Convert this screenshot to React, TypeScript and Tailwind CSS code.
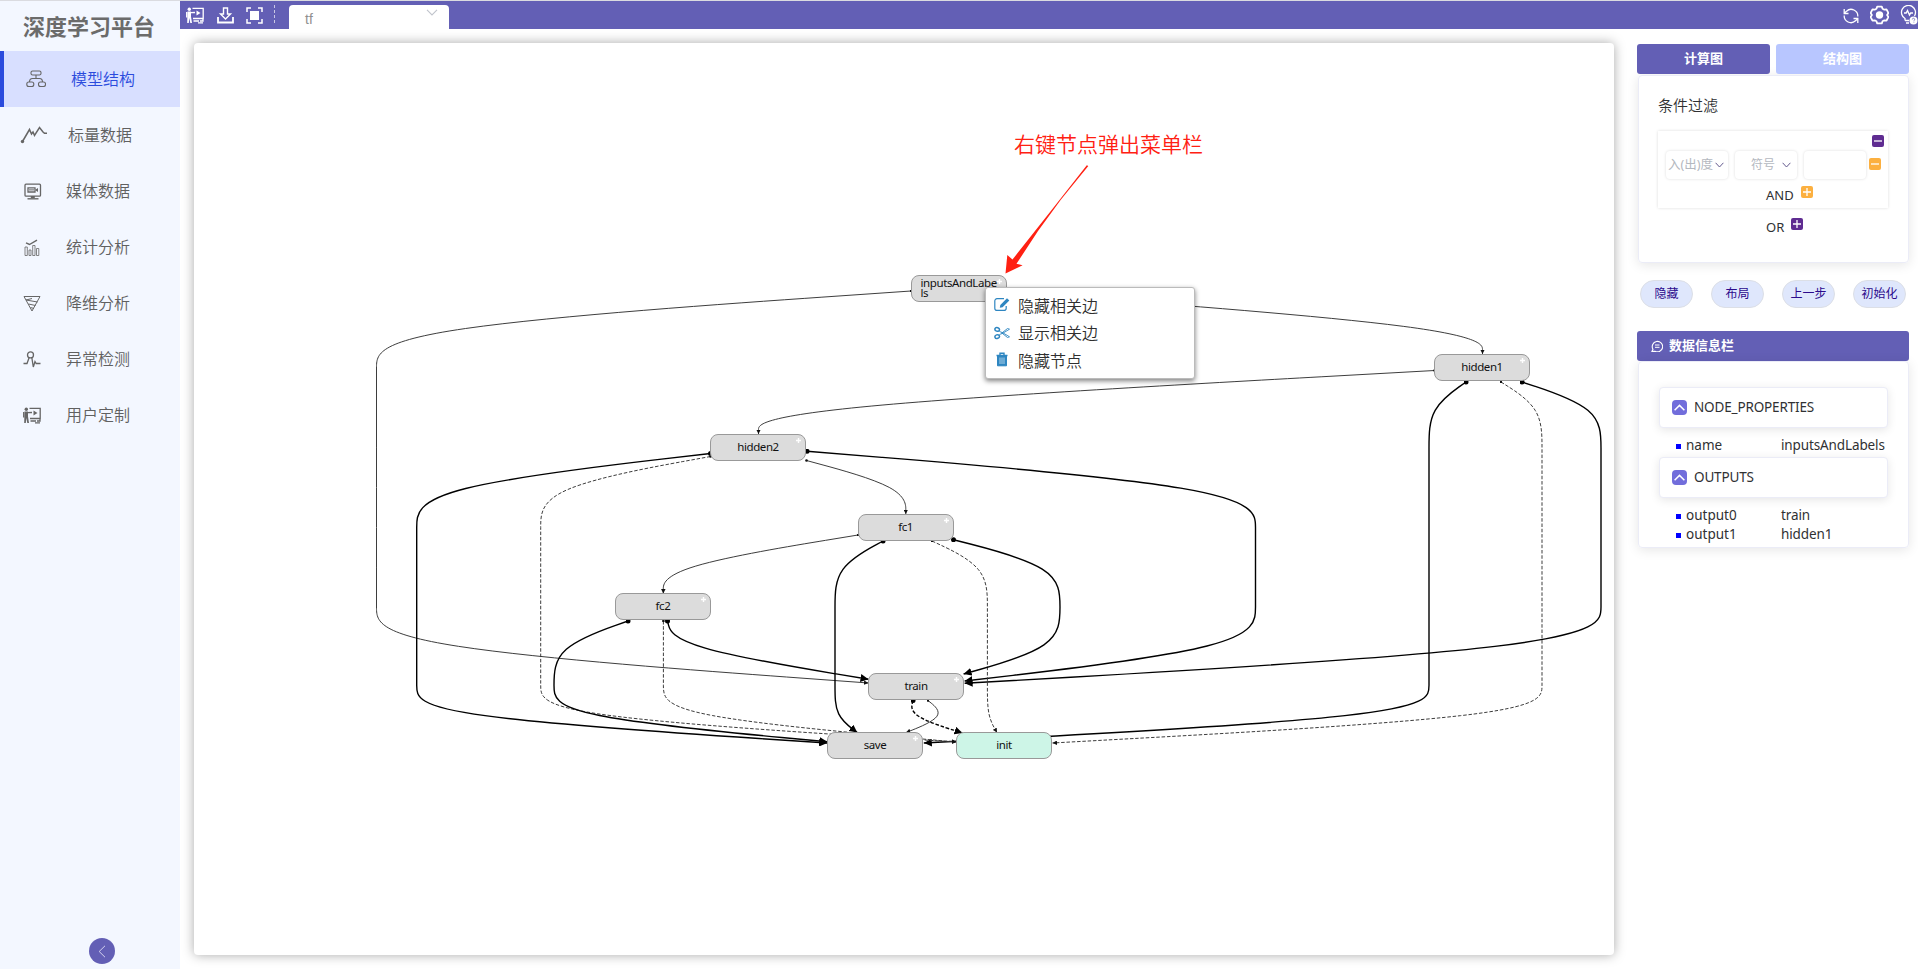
import type { ReactNode } from "react";

type Point = [number, number];

interface GraphNode {
  id: string;
  x: number;
  y: number;
  expandable?: boolean;
}

interface GraphEdge {
  points: Point[];
  bold?: boolean;
  dashed?: boolean;
}

// Graph space starts at the top left corner of the canvas panel.
const ORIGIN_X = 194;
const ORIGIN_Y = 43;
const NODE_WIDTH = 96;
const NODE_HEIGHT = 27;

const nodes: GraphNode[] = [
  { id: "inputsAndLabels", x: 959, y: 288.5, expandable: true },
  { id: "hidden1", x: 1482, y: 367.5, expandable: true },
  { id: "hidden2", x: 758, y: 447.5, expandable: true },
  { id: "fc1", x: 905.6, y: 527.5, expandable: true },
  { id: "fc2", x: 663, y: 606.5, expandable: true },
  { id: "train", x: 916, y: 686.5, expandable: true },
  { id: "save", x: 875, y: 745.5, expandable: true },
  { id: "init", x: 1004, y: 745.5 },
];

const rows = [328, 368, 408, 448, 487.5, 527.5, 567, 607, 647, 687, 716];

function lane(x: number, from: number, to: number): Point[] {
  return rows.filter((y) => y >= from && y <= to).map((y): Point => [x, y]);
}

const edges: GraphEdge[] = [
  { points: [[911, 291], ...lane(376.5, 328, 647), [868.5, 683]] },
  { points: [[1007, 292], [1482.5, 328], [1482.5, 354]] },
  { points: [[1434.5, 370.5], [758.5, 408], [758.5, 434]] },
  { points: [[1466, 382], ...lane(1429, 408, 716), [923.8, 743]], bold: true },
  { points: [[1501, 382], ...lane(1542, 408, 716), [1052.5, 743]], dashed: true },
  { points: [[1522, 382], ...lane(1601, 408, 647), [964.6, 683.3]], bold: true },
  { points: [[807, 451.3], ...lane(1255.5, 487, 647), [964.6, 681]], bold: true },
  { points: [[806.5, 460.5], [905.8, 487.5], [905.8, 514]] },
  { points: [[710.5, 453.5], ...lane(416.7, 487, 716), [827.3, 743]], bold: true },
  { points: [[710.5, 456.5], ...lane(540.7, 487, 716), [956.3, 742]], dashed: true },
  { points: [[858, 535], [663.3, 567], [663.3, 593.5]] },
  { points: [[883, 541], ...lane(835, 567, 716), [857.3, 732.6]], bold: true },
  { points: [[932, 541], ...lane(987.4, 567, 716), [997, 732.6]], dashed: true },
  { points: [[953.5, 539.7], ...lane(1060, 567, 647), [963.6, 674]], bold: true },
  { points: [[667.5, 621], [674, 647], [868.5, 679.3]], bold: true },
  { points: [[628, 621], ...lane(554, 647, 716), [827.3, 741.8]], bold: true },
  { points: [[663.4, 621], ...lane(663.4, 647, 716), [956.3, 742]], dashed: true },
  { points: [[913, 700.5], [909, 716], [962.5, 733]], bold: true, dashed: true },
  { points: [[928, 700.5], [947, 716], [906, 732.6]] },
];

// Uniform cubic B-spline clamped to its first and last control points.
function basisPath(points: Point[]): string {
  const mix = (a: Point, b: Point, k: number) =>
    `${(a[0] * (1 - k) + b[0] * k).toFixed(2)},${(a[1] * (1 - k) + b[1] * k).toFixed(2)}`;
  const knot = (a: Point, b: Point, c: Point) =>
    `${((a[0] + 4 * b[0] + c[0]) / 6).toFixed(2)},${((a[1] + 4 * b[1] + c[1]) / 6).toFixed(2)}`;
  const n = points.length;
  let d = `M${points[0]} L${mix(points[0], points[1], 1 / 6)}`;
  for (let i = 0; i < n - 1; i++) {
    const a = points[i];
    const b = points[i + 1];
    const c = points[Math.min(i + 2, n - 1)];
    d += ` C${mix(a, b, 1 / 3)} ${mix(a, b, 2 / 3)} ${knot(a, b, c)}`;
  }
  return `${d} L${points[n - 1]}`;
}

function Svg({ className, box = "0 0 24 24", children }: { className: string; box?: string; children: ReactNode }) {
  return (
    <svg className={className} viewBox={box} fill="none" stroke="currentColor" strokeWidth="1.5">
      {children}
    </svg>
  );
}

const ModelIcon = () => (
  <Svg className="h-[18px] w-5" box="0 0 20 18">
    <g strokeWidth="1.1">
      <rect x="5" y="1" width="10" height="4" rx="1.6" />
      <path d="M10 5v3.5M3.5 12c0-2.500 1-3.500 3-3.500h7c2 0 3 1 3 3.500" />
      <rect x="0.800" y="12" width="7" height="4.500" rx="2" />
      <rect x="12.500" y="12" width="7" height="4.500" rx="2" />
    </g>
  </Svg>
);

const ScalarIcon = () => (
  <Svg className="h-[18px] w-[27px]" box="0 0 27 18">
    <path d="M2.500 15.500 9.500 3.500l2 4.500 1.500-2 1.500 3.500 5-8 3.500 4.500 1.500 1.300h2.500" strokeWidth="1.500" />
    <circle cx="2.500" cy="15.500" r="1.700" fill="currentColor" stroke="none" />
  </Svg>
);

const MediaIcon = () => (
  <Svg className="h-[17px] w-[18px]" box="0 0 18 17">
    <rect x="1" y="1.200" width="15.500" height="12" rx="1" strokeWidth="1.300" />
    <path d="M4 4.800h7v4.200H4z" strokeWidth="1.300" />
    <path d="m11 6.900 3-2v4.200z" fill="currentColor" stroke="none" />
    <path d="M5 6.900h5" strokeWidth="1" />
    <path d="M8.800 13v2" strokeWidth="4" />
    <path d="M3.500 15.800h11" strokeWidth="1.400" />
  </Svg>
);

const StatsIcon = () => (
  <Svg className="h-[17px] w-4" box="0 0 16 17">
    <path d="M2 3.800 5.500 5.500 13 1.200" strokeWidth="1.400" />
    <path d="M1 16.500V8h2.300v8.500zM5 16.500V11h2v5.500zM8.700 16.500V6.500H11v10zM12.500 16.500v-7h2.300v7z" strokeWidth="0.800" />
  </Svg>
);

const ReduceIcon = () => (
  <Svg className="h-[17px] w-[18px]" box="0 0 18 17">
    <path d="M1 1.500h16L9 16zM3 5l11.500 2M5.500 9 12.500 10.500M7.500 12.500l3.500 1M3 5l6-1.500" strokeWidth="1" />
  </Svg>
);

const AnomalyIcon = () => (
  <Svg className="h-[17px] w-[18px]" box="0 0 18 17">
    <circle cx="7.500" cy="3.900" r="3" strokeWidth="1.300" />
    <path d="M.5 12.500H4l2-5.500M8.800 6.500 10.300 16 12 10.500l1.200 2H17.500" strokeWidth="1.300" />
  </Svg>
);

const CustomIcon = ({ className = "h-[17px] w-[18px]" }: { className?: string }) => (
  <Svg className={className} box="0 0 18 17">
    <circle cx="3.300" cy="2.200" r="1.700" fill="currentColor" stroke="none" />
    <path d="M1.500 4.500h3.500v5L6 16H4.300L3.300 11 2.800 16H1.200z" fill="currentColor" stroke="none" />
    <path d="M.7 5v5.500M4.500 5.700 9 5.500" strokeWidth="1.300" />
    <path d="M6.500 1.300h10.700v10.200H7M7.500 14h5.500M12 15.800h5M17 11.500v2.500h-3" strokeWidth="1.300" />
    <path d="m10.500 3.500 4 2.500-4 2.500z" fill="currentColor" stroke="none" />
  </Svg>
);

const menu = [
  { label: "模型结构", icon: <ModelIcon />, pad: "pl-[22px]", gap: "gap-[25px]", active: true },
  { label: "标量数据", icon: <ScalarIcon />, pad: "pl-4", gap: "gap-[21px]" },
  { label: "媒体数据", icon: <MediaIcon />, pad: "pl-5", gap: "gap-6" },
  { label: "统计分析", icon: <StatsIcon />, pad: "pl-5", gap: "gap-[26px]" },
  { label: "降维分析", icon: <ReduceIcon />, pad: "pl-[19px]", gap: "gap-[25px]" },
  { label: "异常检测", icon: <AnomalyIcon />, pad: "pl-[19px]", gap: "gap-[25px]" },
  { label: "用户定制", icon: <CustomIcon />, pad: "pl-[19px]", gap: "gap-[25px]" },
];

function Sidebar() {
  return (
    <aside className="flex w-[180px] shrink-0 flex-col bg-[#f3f7ff]">
      <div className="flex h-[50px] items-center pl-[23px] text-[22px] leading-none font-bold text-[#6b6b6b]">深度学习平台</div>
      <nav className="flex flex-col">
        {menu.map((item) => (
          <a
            key={item.label}
            className={`flex h-14 items-center border-l-4 text-base ${item.pad} ${item.gap} ${
              item.active ? "border-[#2b4bdd] bg-[#d8dfff] text-[#2b4bdd]" : "border-transparent text-[#606060]"
            }`}
          >
            <span className="shrink-0 text-[#666]">{item.icon}</span>
            <span className="pb-px font-[350] whitespace-nowrap">{item.label}</span>
          </a>
        ))}
      </nav>
      <div className="mt-auto mb-[5px] ml-[89px] flex size-[26px] items-center justify-center rounded-full bg-[#635fb5]">
        <Svg className="h-[13px] w-2" box="0 0 8 13">
          <path d="M7 .8 1.200 6.500 7 12.200" stroke="#d5d3f0" strokeWidth="1" />
        </Svg>
      </div>
    </aside>
  );
}

function TopBar() {
  return (
    <header className="flex h-7 shrink-0 items-center bg-[#635fb5] text-white">
      <CustomIcon className="ml-[6px] h-[17px] w-[18px]" />
      <Svg className="ml-[13px] h-[17px] w-[17px]" box="0 0 17 17">
        <path d="M1 10v5.500h15V10" strokeWidth="1.800" />
        <path d="M6.500 1h4v6h3L8.500 12 3.500 7h3z" strokeWidth="1.400" />
      </Svg>
      <Svg className="ml-[12px] h-[17px] w-[17px]" box="0 0 17 17">
        <path d="M1 5V1h4M12 1h4v4M16 12v4h-4M5 16H1v-4" strokeWidth="1.500" />
        <rect x="4" y="4" width="9" height="9" fill="currentColor" stroke="none" />
      </Svg>
      <Svg className="ml-[11px] h-5 w-px" box="0 0 1 20">
        <path d="M.5 0v20" stroke="#c9c7e4" strokeWidth="1" strokeDasharray="3 2" />
      </Svg>
      <div className="mt-1 ml-[14px] flex h-6 w-40 items-start justify-between rounded-t-[4px] bg-white pr-[11px] pl-4 text-[#909090]">
        <span className="pt-1 font-['Liberation_Sans',sans-serif] text-sm leading-5">tf</span>
        <Svg className="mt-1 h-[7px] w-3" box="0 0 12 7">
          <path d="M1 .8 6 6 11 .8" stroke="#c0c4cc" strokeWidth="1.100" />
        </Svg>
      </div>
      <div className="ml-auto flex items-center">
        <Svg className="mt-px h-4 w-4" box="0 0 16 16">
          <path d="M14.800 8.500A6.700 6.700 0 0 0 3.500 3.200L1.500 5M1.200 7.500A6.700 6.700 0 0 0 12.500 12.800l2-1.800" strokeWidth="1.300" />
          <path d="M1.200 1v4.500h4.300M14.800 15v-4.500h-4.300" strokeWidth="1.300" />
        </Svg>
        <Svg className="mr-px ml-[11px] h-5 w-[19px]" box="0 0 20 20">
          <path
            d="M7.600 1.200h4.800l.8 2.200 1.900 1 2.300-.4 2 3.900-1.400 2.100 1.400 2.100-2 3.900-2.300-.4-1.900 1-.8 2.200H7.600l-.8-2.200-1.900-1-2.300.4-2-3.900L2 10 .6 7.900l2-3.900 2.300.4 1.900-1z"
            strokeWidth="1.900"
            strokeLinejoin="round"
          />
          <circle cx="10" cy="10" r="3.900" fill="currentColor" stroke="none" />
        </Svg>
        <Svg className="ml-[10px] h-5 w-[18px]" box="0 0 18 20">
          <path d="M5 15.500v-2A7 7 0 1 1 14.500 11M5 15.500h4M6 18h3" strokeWidth="1.300" />
          <path d="M4 8h2.200l1.300-2.500L9.500 10l1.200-2H13" strokeWidth="1.400" />
          <circle cx="13.500" cy="15.500" r="4" fill="currentColor" stroke="none" />
          <path d="M12.300 14.500a1.200 1.200 0 1 1 1.600 1.100v.7M13.900 17.300v.6" stroke="#635fb5" strokeWidth="0.700" />
        </Svg>
      </div>
    </header>
  );
}

function ContextMenu() {
  return (
    <div className="absolute top-[244px] left-[791px] flex h-[92px] w-[210px] flex-col rounded-[3px] border border-[#bbb] bg-white pt-[4px] text-base font-[350] text-[#2f2f2f] shadow-[0_2px_5px_rgba(0,0,0,0.5)]">
      <div className="flex h-[27px] items-center pl-2">
        <Svg className="mr-2 mb-[3px] h-[15px] w-4 text-[#2e86c1]" box="0 0 16 15">
          <path d="M10 1.700H3A2.200 2.200 0 0 0 .8 3.900v7.300A2.200 2.200 0 0 0 3 13.400h7a2.200 2.200 0 0 0 2.200-2.200V9" strokeWidth="1.200" />
          <path d="m5.800 10.700.5-2.800L13 1.200l2.300 2.300-6.700 6.700z" fill="currentColor" stroke="none" />
        </Svg>
        隐藏相关边
      </div>
      <div className="flex h-[28px] items-center pl-2">
        <Svg className="mr-2 h-[14px] w-4 text-[#2e86c1]" box="0 0 16 14">
          <ellipse cx="3.200" cy="3.400" rx="2.300" ry="1.800" strokeWidth="1.500" transform="rotate(20 3.200 3.400)" />
          <ellipse cx="3.200" cy="10.600" rx="2.300" ry="1.800" strokeWidth="1.500" transform="rotate(-20 3.200 10.600)" />
          <path d="M5 4.700 13.500 11.500l2-.7L7.500 6M5 9.300l8.500-6.800 2 .7L7.500 8" strokeWidth="0.900" />
        </Svg>
        显示相关边
      </div>
      <div className="flex h-[27px] items-center pl-2">
        <Svg className="mr-2 mb-[2px] h-[15px] w-4 text-[#2e86c1]" box="0 0 16 15">
          <path d="M2.500 3.500h11M6 3V1.300h4V3" strokeWidth="1.400" />
          <path d="M3.500 4h9v9.800h-9z" fill="currentColor" strokeWidth="1" />
          <path d="M6 5.500v6.500M8 5.500v6.500M10 5.500v6.500" stroke="#cfe4f2" strokeWidth="0.800" />
        </Svg>
        隐藏节点
      </div>
    </div>
  );
}

function GraphCanvas() {
  return (
    <main className="relative mt-[14px] ml-[14px] h-[912px] w-[1420px] shrink-0 rounded-[4px] bg-white shadow-[0_0_12px_rgba(0,0,0,0.34)]">
      <svg className="absolute inset-0 h-full w-full" viewBox="194 43 1420 912" fill="none">
        <defs>
          <marker id="tip" viewBox="0 0 10 10" refX="10" refY="5" markerWidth="4.500" markerHeight="4.500" markerUnits="userSpaceOnUse" orient="auto">
            <path d="M0 0 10 5 0 10z" fill="#111" />
          </marker>
          <marker id="tipBold" viewBox="0 0 10 10" refX="10" refY="5" markerWidth="8" markerHeight="8" markerUnits="userSpaceOnUse" orient="auto">
            <path d="M0 0 10 5 0 10z" fill="#000" />
          </marker>
          <marker id="dot" viewBox="0 0 4 4" refX="2" refY="2" markerWidth="2.600" markerHeight="2.600" markerUnits="userSpaceOnUse">
            <circle cx="2" cy="2" r="2" fill="#111" />
          </marker>
          <marker id="dotBold" viewBox="0 0 4 4" refX="2" refY="2" markerWidth="5" markerHeight="5" markerUnits="userSpaceOnUse">
            <circle cx="2" cy="2" r="2" fill="#000" />
          </marker>
        </defs>
        {edges.map((edge, i) => (
          <path
            key={i}
            d={basisPath(edge.points)}
            stroke={edge.bold ? "#000" : "#333"}
            strokeWidth={edge.bold ? 1.4 : 0.95}
            strokeDasharray={edge.dashed ? "3.500 1.800" : undefined}
            markerStart={edge.bold ? "url(#dotBold)" : "url(#dot)"}
            markerEnd={edge.bold ? "url(#tipBold)" : "url(#tip)"}
          />
        ))}
      </svg>

      {nodes.map((node) => (
        <div
          key={node.id}
          className={`absolute flex h-[27px] w-24 items-center justify-center rounded-[8px] border border-[#999] text-[#111] ${
            node.expandable ? "bg-[#dcdcdc]" : "bg-[#cdf5e7]"
          }`}
          style={{ left: node.x - ORIGIN_X - NODE_WIDTH / 2, top: node.y - ORIGIN_Y - NODE_HEIGHT / 2 }}
        >
          <span className="max-w-[77px] pb-px text-left text-[11.500px] leading-[10px] tracking-[-0.400px] break-all">{node.id}</span>
          {node.expandable && (
            <Svg className="absolute top-[3px] right-1 size-[5px] text-white" box="0 0 5 5">
              <path d="M2.500 0v5M0 2.500h5" strokeWidth="1.400" />
            </Svg>
          )}
        </div>
      ))}

      <ContextMenu />

      <div className="absolute top-[86px] left-[820px] text-[21px] leading-[30px] font-[350] whitespace-nowrap text-[#ff2012]">右键节点弹出菜单栏</div>
      <svg className="absolute top-[120px] left-[810px] h-[112px] w-[86px]" viewBox="1004 163 86 112">
        <path d="M1086.800 165.300 1052 209.500 1012.500 259.500 1007.300 255 1005.500 273.500 1022.600 265.300 1016.500 263.800 1038 231 1061 199.500 1088.300 166z" fill="#ff2012" />
      </svg>
    </main>
  );
}

function SquareButton({ tone, plus }: { tone: "purple" | "orange"; plus?: boolean }) {
  return (
    <span
      className={`flex size-3 shrink-0 items-center justify-center rounded-[2px] text-white ${
        tone === "purple" ? "bg-[#5f2c91]" : "bg-[#fcb040]"
      }`}
    >
      <Svg className="size-2" box="0 0 8 8">
        <path d={plus ? "M0 4h8M4 0v8" : "M0 4h8"} strokeWidth="1.300" />
      </Svg>
    </span>
  );
}

const Chevron = () => (
  <Svg className="h-[6px] w-[9px] shrink-0" box="0 0 9 6">
    <path d="M.6.8 4.500 5 8.400.8" stroke="#635a8e" strokeWidth="1" />
  </Svg>
);

function FilterPanel() {
  const field = "flex h-7 w-[62px] items-center rounded-[4px] bg-white text-xs text-[#b4b8c0] shadow-[0_0_3px_rgba(0,0,0,0.14)]";
  return (
    <section>
      <div className="flex gap-[6px] text-[13px] font-bold text-white">
        <div className="flex h-[30px] w-[133px] items-center justify-center rounded-[3px] bg-[#635fb5]">计算图</div>
        <div className="flex h-[30px] w-[133px] items-center justify-center rounded-[3px] bg-[#b8c6ff]">结构图</div>
      </div>
      <div className="mt-px ml-px flex h-[188px] w-[271px] flex-col rounded-[4px] border border-[#ebecf7] pt-[18px] pl-[19px] shadow-[0_2px_12px_rgba(0,0,0,0.1)]">
        <h2 className="text-[15px] leading-[22px] font-[350] text-[#303133]">条件过滤</h2>
        <div className="mt-[15px] flex h-[77px] w-[230px] flex-col shadow-[0_0_3px_rgba(0,0,0,0.14)]">
          <div className="flex h-4 items-end justify-end pr-1">
            <SquareButton tone="purple" />
          </div>
          <div className="mt-1 flex items-center pl-2">
            <div className={`${field} gap-[2px] pl-[2px] text-[12.500px] whitespace-nowrap`}>
              入(出)度
              <Chevron />
            </div>
            <div className={`${field} ml-[7px] justify-end gap-[7px] pr-[6px]`}>
              符号
              <Chevron />
            </div>
            <div className={`${field} ml-[7px]`} />
            <div className="mb-[2px] ml-[3px]">
              <SquareButton tone="orange" />
            </div>
          </div>
          <div className="mt-[7px] flex items-start gap-2 pl-[108px] text-[13px] text-[#303133]">
            <span className="w-[27px] leading-[18px]">AND</span>
            <SquareButton tone="orange" plus />
          </div>
        </div>
        <div className="mt-[10px] flex items-start gap-2 pl-[108px] text-[13px] text-[#303133]">
          <span className="w-[17px] leading-[18px]">OR</span>
          <SquareButton tone="purple" plus />
        </div>
      </div>
    </section>
  );
}

function InfoGroup({ title, rows: entries }: { title: string; rows: [string, string][] }) {
  return (
    <div>
      <div className="flex h-[41px] w-[229px] items-center gap-[7px] rounded-[4px] border border-[#ebecf7] bg-white pl-3 shadow-[0_2px_10px_rgba(0,0,0,0.1)]">
        <span className="flex size-[15px] items-center justify-center rounded-[4px] bg-[#716ddb]">
          <Svg className="h-[7px] w-[11px]" box="0 0 11 7">
            <path d="M.6 6.200 5.500 1.400l4.900 4.800" stroke="#fff" strokeWidth="1.500" />
          </Svg>
        </span>
        <span className="pb-px tracking-[-0.150px]">{title}</span>
      </div>
      <ul className="pt-2 pl-[17px]">
        {entries.map(([key, value]) => (
          <li key={key} className="flex h-[19px] items-center">
            <span className="mt-[2px] mr-[5px] size-[5px] bg-[#0000ff]" />
            <span className="w-[95px] pb-px">{key}</span>
            <span className="pb-px tracking-[-0.120px] whitespace-nowrap">{value}</span>
          </li>
        ))}
      </ul>
    </div>
  );
}

function InfoPanel() {
  return (
    <section className="mt-[23px]">
      <div className="flex h-[30px] w-[272px] items-center gap-[6px] rounded-[3px] bg-[#635fb5] pl-[14px] text-[13px] font-bold text-white">
        <Svg className="h-3 w-3" box="0 0 12 12">
          <path d="M1 11.300 2 9.300A5.200 5.200 0 1 1 4 11.200z" strokeWidth="1.100" />
          <path d="M4 5h4.500M4 7.300h4.500" strokeWidth="1" />
        </Svg>
        数据信息栏
      </div>
      <div className="ml-px h-[187px] w-[271px] rounded-[4px] border border-[#ebecf7] pt-[25px] pl-5 text-[13.500px] leading-5 text-[#303133] shadow-[0_2px_12px_rgba(0,0,0,0.1)]">
        <InfoGroup title="NODE_PROPERTIES" rows={[["name", "inputsAndLabels"]]} />
        <div className="mt-[2px]">
          <InfoGroup
            title="OUTPUTS"
            rows={[
              ["output0", "train"],
              ["output1", "hidden1"],
            ]}
          />
        </div>
      </div>
    </section>
  );
}

export default function App() {
  return (
    <div className="flex h-[969px] w-[1918px] flex-col overflow-hidden border-t border-[#dadbe0] bg-white font-['Noto_Sans','Noto_Sans_CJK_SC',sans-serif]">
      <div className="flex min-h-0 flex-1">
        <Sidebar />
        <div className="flex min-w-0 flex-1 flex-col">
          <TopBar />
          <div className="flex">
            <GraphCanvas />
            <div className="mt-[15px] ml-[23px] w-[272px]">
              <FilterPanel />
              <div className="mt-[17px] flex gap-[18px] pl-[3px]">
                {["隐藏", "布局", "上一步", "初始化"].map((label) => (
                  <button
                    key={label}
                    className="h-7 w-[53px] shrink-0 rounded-full border border-[#dcdfe6] bg-[#dfe7fc] text-xs whitespace-nowrap text-[#2b0a8c]"
                  >
                    {label}
                  </button>
                ))}
              </div>
              <InfoPanel />
            </div>
          </div>
        </div>
      </div>
    </div>
  );
}
